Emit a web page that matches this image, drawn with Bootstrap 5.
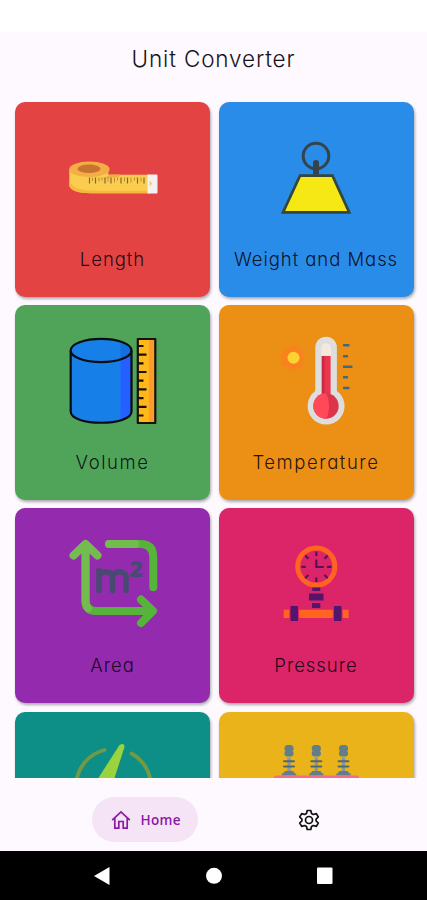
<!DOCTYPE html>
<html lang="en">
<head>
<meta charset="utf-8">
<meta name="viewport" content="width=device-width, initial-scale=1">
<title>Unit Converter</title>
<link href="https://cdn.jsdelivr.net/npm/bootstrap@5.3.0/dist/css/bootstrap.min.css" rel="stylesheet">
<style>
body{font-family:Inter,"Open Sans",sans-serif;background:#fef9ff;font-feature-settings:"cv11";color:#17131a}
.phone{height:900px}
.status{height:32px;background:#fff}
.title-bar{height:62px;padding-bottom:9px}
.title-bar h1{font-size:22.5px;font-weight:300;letter-spacing:.85px}
.scroller{height:684px;padding:8px 13px 0 15px}
.tiles{display:grid;grid-template-columns:195px 195px;grid-auto-rows:195px;gap:8.2px 8.5px}
.tile{border-radius:10px;padding-top:31px;box-shadow:1px 2px 3px rgba(0,0,0,.32)}
.tile svg{width:90px;height:90px;overflow:visible;flex:none}
.tile span{font-size:18.5px;font-weight:300;line-height:24px;margin-top:24px;letter-spacing:.95px;white-space:nowrap;color:rgba(10,5,15,.9)}
.tile .roomy{letter-spacing:1.55px}
.red{background:#e34343}.blue{background:#288ce8}.green{background:#50a45a}.orange{background:#eb9015}
.purple{background:#942aae}.pink{background:#dc2469}.teal{background:#0d8f88}.amber{background:#eab319}
.tabs{height:73px;padding:10px 0 0 91.5px}
.home-tab{width:106px;height:45px;background:#f4e4f6;color:#8c18a5;font:600 13.5px "Open Sans",sans-serif;letter-spacing:.3px;padding-left:19px;gap:10px}
.settings-tab{margin-left:100px}
.sysbar{height:49px;background:#000}
</style>
</head>
<body>
<div class="phone d-flex flex-column overflow-hidden">
<div class="status flex-shrink-0"></div>
<header class="title-bar flex-shrink-0 d-flex align-items-center justify-content-center"><h1 class="m-0">Unit Converter</h1></header>
<main class="scroller flex-shrink-0 overflow-hidden">
<div class="tiles">
<div class="tile red d-flex flex-column align-items-center">
<svg viewBox="67.5 133 90 90">
<path d="M68.800 169v17c2 5 10 7.200 21 7.200h60V174.800h-42V169z" fill="#fbcd4e"/>
<path d="M68.800 180v6c2 5 10 7.200 21 7.200h60v-2.500H92c-12 0-21-3-23.200-10.700z" fill="#f5b83f"/>
<path d="M94 180c8-1 13-3 15-5.500h10v2z" fill="#f2ae43"/>
<ellipse cx="88.900" cy="169.300" rx="20.200" ry="7.700" fill="#f3ae45"/>
<ellipse cx="88.500" cy="168.800" rx="11.500" ry="4.300" fill="#c77431"/>
<path d="M89 177.500v6M95 177.500v6M104.500 177.500v6M110.500 177.500v6M120.500 177.500v6M127 177.500v6M137 177.500v6M143.500 177.500v6" stroke="#806a33" stroke-width="1.200"/>
<path d="M92 177.500v3.500M98.500 177.500v4M101.500 177.500v3M107.500 177.500v4M114 177.500v5M117 177.500v3M124 177.500v4M130.500 177.500v5M134 177.500v3M140.500 177.500v4" stroke="#b08f3c"/>
<path d="M147 174.600h9q1 0 1 1v16.800q0 1-1 1h-9z" fill="#f4f1f2"/><path d="M149 180.500v6l3-3z" fill="#f6d45e"/>
</svg><span>Length</span></div>
<div class="tile blue d-flex flex-column align-items-center">
<svg viewBox="271 133 90 90">
<circle cx="316" cy="156" r="12.800" fill="none" stroke="#35434a" stroke-width="3"/>
<path d="M300 175.700h32.500l16.800 36.700h-66.300z" fill="#f5e814" stroke="#35463d" stroke-width="2.700"/>
<path d="M313 174.500v-12q0-2.500 3-2.500t3 2.500v12z" fill="#35434a"/>
</svg><span>Weight and Mass</span></div>
<div class="tile green d-flex flex-column align-items-center">
<svg viewBox="67.500 336 90 90">
<path d="M70.200 350.500v63.500c2.500 12 58 12 60.800 0v-63.500z" fill="#1680e8"/>
<path d="M120 359l11-7v62q-2 4-11 6.500z" fill="#255fff"/>
<ellipse cx="100.600" cy="350.500" rx="30.400" ry="11.600" fill="#1680e8"/>
<path d="M120 341.600q11 3 11 9t-11 8.800z" fill="#126fe0"/>
<path d="M70.200 350.500v61c0 15 60.800 15 60.800 0v-61" fill="none" stroke="#080c10" stroke-width="2.200"/>
<ellipse cx="100.600" cy="350.500" rx="30.400" ry="11.600" fill="none" stroke="#080c10" stroke-width="2.200"/>
<path d="M137.300 339h17.500v84h-17.500z" fill="#ffb71a"/><path d="M148.500 339h6.500v84h-6.500z" fill="#fb9a2d"/>
<path d="M137.300 339h17.500v84h-17.500zM138 346h5M138 354.600h8M138 363.300h5M138 372h8M138 380.700h5M138 389.400h8M138 398.100h5M138 406.800h8M138 415.500h5" fill="none" stroke="#17120a" stroke-width="2.200" stroke-linejoin="round"/>
</svg><span class="roomy">Volume</span></div>
<div class="tile orange d-flex flex-column align-items-center">
<svg viewBox="271 336 90 90">
<circle cx="293" cy="358" r="10.700" fill="#fa8120"/>
<circle cx="293" cy="358" r="11.600" fill="none" stroke="#fa8120" stroke-width="2" stroke-dasharray="4 5.100"/>
<circle cx="293.500" cy="357.700" r="6" fill="#ffd22f"/>
<path d="M315.300 391v-43.500a10.800 10.800 0 0 1 21.600 0V391a18.500 18.500 0 1 1-21.600 0z" fill="#dedede"/>
<path d="M321.300 355.500V348a4.800 4.800 0 0 1 9.600 0v7.500z" fill="#f4eadb"/>
<path d="M321.800 356h8.800v39h-8.800z" fill="#e9354d"/><path d="M321.800 356h2.500v39h-2.500z" fill="#c92a42"/>
<circle cx="326" cy="406" r="12.700" fill="#dc3449"/>
<path d="M326 393.300a12.700 12.700 0 0 0 0 25.400c4-6 4-18 0-25.400z" fill="#ff4958"/>
<path d="M344 345.300h4.500M344 356.200h3M344 366.800h7.500M344 377.300h3M344 388h4.500" stroke="#3c6b7d" stroke-width="2.400" stroke-linecap="round"/>
</svg><span class="roomy">Temperature</span></div>
<div class="tile purple d-flex flex-column align-items-center">
<svg viewBox="67.500 539.500 90 90">
<g fill="none" stroke-width="8" stroke-linecap="round" stroke-linejoin="round">
<path d="M108.500 544.500h31q13.300 0 13.300 13.300v30" stroke="#56b43a"/>
<path d="M108.500 544.500h26" stroke="#72bd4e"/>
<path d="M85 546v55q0 10.500 10.500 10.500H152M140.500 600l12 11.500-12 12" stroke="#56b43a"/>
<path d="M73 556l12-11.500L97 556M85 546v55q0 5 2.500 7.500" stroke="#72bd4e"/>
<path d="M98.500 591v-20M98.500 578.500c0-8.500 13.500-8.500 13.500 0V591M112 578.500c0-8.500 13.500-8.500 13.500 0V591" stroke="#484a72" stroke-width="5.500"/>
</g>
<text x="129" y="577" font-family="Open Sans,sans-serif" font-size="23" font-weight="800" fill="#484a72">2</text>
</svg><span>Area</span></div>
<div class="tile pink d-flex flex-column align-items-center">
<svg viewBox="271 539.500 90 90">
<circle cx="316.300" cy="567" r="18.600" fill="none" stroke="#ff6420" stroke-width="5"/>
<g stroke="#52145f" stroke-width="2.200" fill="none">
<path d="M316.300 552v4.500M316.300 578v4.500M301.300 567.300h4.500M327 567.300h4.500M305.200 556l3.200 3.200M324.500 575.500l3.200 3.200M327.700 556l-3.200 3.200M308.400 575.500l-3.200 3.200M316.300 560v7.500h7.500"/></g>
<path d="M312.300 588h8v3.500h-8zM309 594h14.500v7H309zM312 603.500h8.300v5H312z" fill="#54156c"/>
<path d="M283.700 610.300h65v8.200h-65z" fill="#ff6420"/>
<path d="M290.500 606.500h7.500v15h-7.500zM334 606.500h7.500v15h-7.500z" fill="#54156c" stroke="#dc2469" stroke-width="2.400" paint-order="stroke"/>
</svg><span>Pressure</span></div>
<div class="tile teal d-flex flex-column align-items-center">
<svg viewBox="67.500 742.500 90 90">
<path d="M104 749.500A37.500 37.500 0 0 0 75.500 786M131 753A37.500 37.500 0 0 1 150.500 786" fill="none" stroke="#729a43" stroke-width="3.800" stroke-linecap="round"/>
<path d="M119 744.500q5-2.500 5 2L109 793q-10 10-21 0z" fill="#9ad33e"/>
</svg></div>
<div class="tile amber d-flex flex-column align-items-center">
<svg viewBox="271 742.500 90 90">
<defs><g id="insulator"><path d="M-1.700 757h3.400v15h-3.400z" fill="#8898a0"/><path d="M-2.500 744.500h5l2 2v3l-1 1 1 1v3l-2 1.500h-5l-2-1.500v-3l1-1-1-1v-3zM-6 773l2-2.500h8l2 2.500h1.200v2H-7.200v-2z" fill="#627d8b"/><path d="M-5 760.700H5M-5 766H5" stroke="#4f6a70" stroke-width="2" stroke-linecap="round"/></g></defs>
<use href="#insulator" x="289"/><use href="#insulator" x="316.300"/><use href="#insulator" x="343.500"/>
<path d="M276 775h81q2 0 2 2v4h-85v-4q0-2 2-2z" fill="#f46f83"/>
</svg></div>
</div>
</main>
<nav class="tabs flex-shrink-0 d-flex align-items-center">
<a class="home-tab rounded-pill d-flex align-items-center text-decoration-none" href="#">
<svg width="20" height="20" viewBox="0 0 20 20" fill="none" stroke="#8c18a5" stroke-width="1.700"><path d="M1.200 10.200L10 2l8.800 8.200M3.800 8v10.200h4V11.500h4.400v6.700h4V8"/></svg>Home</a>
<a class="settings-tab d-flex" href="#" aria-label="Settings">
<svg width="22" height="22" viewBox="0 0 22 22" fill="none" stroke="#111" stroke-width="1.700" stroke-linejoin="round"><path d="M9.200 1.500h3.600l.7 3 1.800 1 3-.9 2 3.400-2.200 2.100v1.800l2.200 2.100-2 3.400-3-.9-1.800 1-.7 3H9.200l-.7-3-1.800-1-3 .9-2-3.400 2.200-2.100v-1.800l-2.200-2.100 2-3.400 3 .9 1.800-1z"/><circle cx="11" cy="11" r="3.500"/></svg></a>
</nav>
<div class="sysbar flex-shrink-0">
<svg class="d-block" width="427" height="49" fill="#fff"><path d="M94 25l15.500-9v18z"/><circle cx="214" cy="24.800" r="8"/><rect x="317" y="16.500" width="15.500" height="16.500" rx="1"/></svg>
</div>
</div>
<script src="https://cdn.jsdelivr.net/npm/bootstrap@5.3.0/dist/js/bootstrap.bundle.min.js"></script>
</body>
</html>
